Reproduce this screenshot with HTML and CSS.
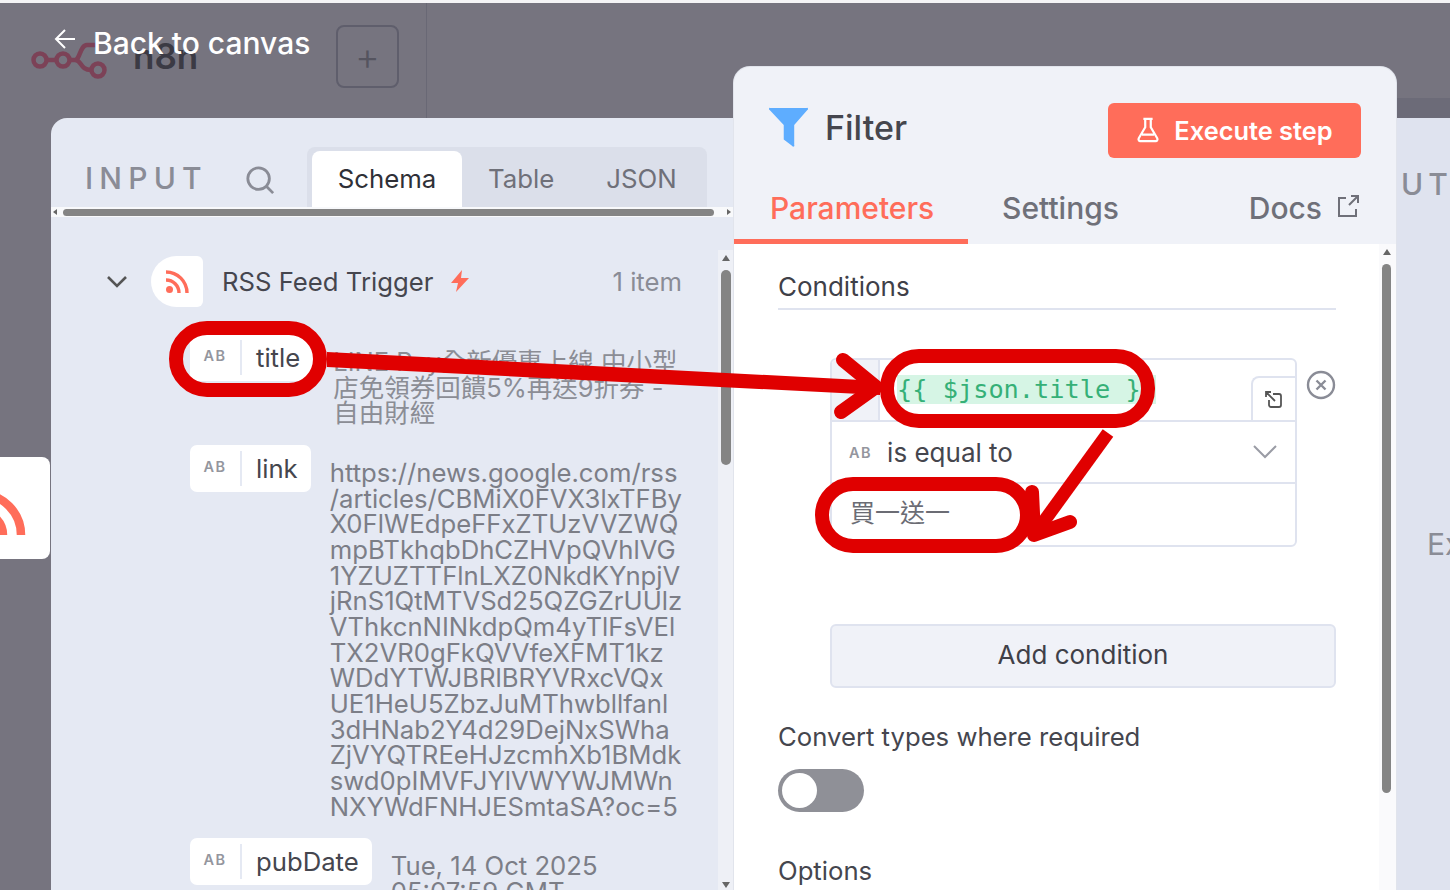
FILE: index.html
```html
<!DOCTYPE html>
<html lang="en">
<head>
  <meta charset="UTF-8" />
  <title>Filter</title>
  <link rel="stylesheet" href="styles.css">
</head>
<body>
  <div class="stage">
    <div class="topbar">
      <div class="logo-cell">
        <svg class="logo" width="78" height="40" viewBox="0 0 78 40" fill="none" stroke="#7c4257" stroke-width="4.500">
          <circle cx="9" cy="19" r="6.500"/><circle cx="32" cy="19" r="6.500"/><circle cx="67" cy="29" r="6.500"/>
          <path d="M16 19h9M39 19h5c5 0 5-15 12-15h10M44 19c7 0 5 10 16 10"/>
        </svg>
        <span class="n8n">n8n</span>
      </div>
      <div class="plus-box">+</div>
    </div>
    <div class="top-strip"></div>

    <a class="back">
      <svg width="24" height="24" viewBox="0 0 24 24" fill="none" stroke="#fff" stroke-width="2"><path d="M22 12H3M12 3l-9 9 9 9"/></svg>
      <span>Back to canvas</span>
    </a>

    <div class="node-card">
      <svg width="50" height="102" viewBox="0 0 50 102" fill="none" stroke="#ff6d5a" stroke-width="8.500">
        <path d="M-20 37a41 41 0 0 1 41 41"/><path d="M-20 55a23 23 0 0 1 23 23"/>
      </svg>
    </div>

    <section class="panel output">
      <div class="output-title">UT</div>
      <div class="output-hint">Ex</div>
    </section>

    <section class="panel input">
      <header class="input-head">
        <span class="input-label">INPUT</span>
        <svg class="search" width="30" height="30" viewBox="0 0 32 32" fill="none" stroke="#8a8c96" stroke-width="3"><circle cx="14.500" cy="14.500" r="11.500"/><path d="M23 23l7 7"/></svg>
        <div class="tabs">
          <span class="tab active">Schema</span>
          <span class="tab">Table</span>
          <span class="tab">JSON</span>
        </div>
      </header>
      <div class="hscroll"><i class="arr-l"></i><div class="hthumb"></div><i class="arr-r"></i></div>
      <div class="schema">
        <div class="trigger">
          <svg class="chev" width="22" height="14" viewBox="0 0 22 14" fill="none" stroke="#555" stroke-width="2.600"><path d="M2 2l9 9 9-9"/></svg>
          <div class="bubble">
            <svg width="26" height="26" viewBox="0 0 26 26" fill="none" stroke="#ff6d5a" stroke-width="3.400"><path d="M2 3a21 21 0 0 1 21 21"/><path d="M2 11a13 13 0 0 1 13 13"/><circle cx="5.500" cy="20.500" r="3.500" fill="#ff6d5a" stroke="none"/></svg>
          </div>
          <span class="trigger-name">RSS Feed Trigger</span>
          <svg class="bolt" width="20" height="24" viewBox="0 0 20 24" fill="#ff6d5a"><path d="M12 1L1 14h7l-2 9 13-14h-8z"/></svg>
          <span class="count">1 item</span>
        </div>

        <div class="row">
          <div class="pill"><span class="ab">AB</span><span class="key">title</span></div>
          <div class="val cjk val-title">LINE Pay全新優惠上線 中小型<br>店免領券回饋5%再送9折券 -<br>自由財經</div>
        </div>
        <div class="row">
          <div class="pill"><span class="ab">AB</span><span class="key">link</span></div>
          <div class="val val-link">https://news.google.com/rss<br>/articles/CBMiX0FVX3lxTFBy<br>X0FlWEdpeFFxZTUzVVZWQ<br>mpBTkhqbDhCZHVpQVhlVG<br>1YZUZTTFlnLXZ0NkdKYnpjV<br>jRnS1QtMTVSd25QZGZrUUlz<br>VThkcnNINkdpQm4yTlFsVEl<br>TX2VR0gFkQVVfeXFMT1kz<br>WDdYTWJBRlBRYVRxcVQx<br>UE1HeU5ZbzJuMThwbllfanl<br>3dHNab2Y4d29DejNxSWha<br>ZjVYQTREeHJzcmhXb1BMdk<br>swd0pIMVFJYlVWYWJMWn<br>NXYWdFNHJESmtaSA?oc=5</div>
        </div>
        <div class="row">
          <div class="pill"><span class="ab">AB</span><span class="key">pubDate</span></div>
          <div class="val val-date">Tue, 14 Oct 2025<br>05:07:59 GMT</div>
        </div>
      </div>
      <div class="vscroll"><i class="arr-u"></i><div class="vthumb"></div><i class="arr-d"></i></div>
    </section>

    <section class="panel center">
      <header class="center-head">
        <svg class="funnel" width="39" height="40" viewBox="0 0 40 42" fill="#5eadff"><path d="M1 1h38a1 1 0 0 1 1 2L26 19v21a1 1 0 0 1-2 1l-9-7V19L0 3a1 1 0 0 1 1-2z"/></svg>
        <h1>Filter</h1>
        <button class="run">
          <svg width="24" height="26" viewBox="0 0 26 28" fill="none" stroke="#fff" stroke-width="2.400"><path d="M8 2h10M10 2v9L3 23a2 2 0 0 0 2 3h16a2 2 0 0 0 2-3l-7-12V2M6.500 19h13"/></svg>
          <span>Execute step</span>
        </button>
      </header>
      <nav class="center-tabs">
        <span class="ctab on">Parameters</span>
        <span class="ctab">Settings</span>
        <span class="ctab docs">Docs
          <svg width="24" height="24" viewBox="0 0 24 24" fill="none" stroke="#6f7079" stroke-width="2"><path d="M10 4H3v18h17v-7M13 11L22 2M15 2h7v7"/></svg>
        </span>
      </nav>
      <div class="params">
        <div class="section-title">Conditions</div>
        <div class="cond-wrap">
          <div class="cond">
            <div class="cond-row first">
              <div class="fx-cell"></div>
              <div class="expr"><span>{{ $json.title }}</span></div>
              <div class="expand">
                <svg width="20" height="20" viewBox="0 0 20 20" fill="none" stroke="#555" stroke-width="1.800"><path d="M9 4h6a2 2 0 0 1 2 2v9a2 2 0 0 1-2 2H7a2 2 0 0 1-2-2v-5M2 2l9 9M2 7V2h5"/></svg>
              </div>
            </div>
            <div class="cond-row op">
              <span class="ab">AB</span>
              <span class="op-name">is equal to</span>
              <svg class="op-chev" width="24" height="14" viewBox="0 0 24 14" fill="none" stroke="#9a9ca5" stroke-width="2"><path d="M1 1l11 11L23 1"/></svg>
            </div>
            <div class="cond-row value cjk">買一送一</div>
          </div>
          <svg class="remove" width="30" height="30" viewBox="0 0 30 30" fill="none" stroke="#8a8c96" stroke-width="2.400"><circle cx="15" cy="15" r="13"/><path d="M10.500 10.500l9 9M19.500 10.500l-9 9"/></svg>
        </div>
        <button class="add">Add condition</button>
        <div class="field-label">Convert types where required</div>
        <div class="toggle"><i></i></div>
        <div class="field-label options">Options</div>
      </div>
      <div class="vscroll main"><i class="arr-u"></i><div class="vthumb"></div></div>
    </section>

    <svg class="marks" width="1450" height="890" viewBox="0 0 1450 890">
      <rect x="176" y="328" width="144" height="62" rx="31" class="ring"/>
      <rect x="887" y="356" width="261" height="65" rx="32" class="ring"/>
      <rect x="822" y="484" width="205" height="62" rx="31" class="ring"/>
      <path d="M327 352L880 381V395L327 367Z" fill="#e00000"/>
      <path d="M843 360L876 387L841 412" class="arrow"/>
      <path d="M1108 433L1034 535" class="arrow thin"/>
      <path d="M1032 492L1034 535L1070 522" class="arrow"/>
    </svg>
  </div>
</body>
</html>
```

FILE: styles.css
```css
html,body{margin:0;padding:0;height:100%;}
body{font-family:'Inter',sans-serif;color:#3f4048;overflow:hidden;}
.cjk{font-family:'Inter','Noto Sans CJK TC',sans-serif;}
.stage{position:relative;width:1450px;height:890px;overflow:hidden;background:#76747f;border-top:3px solid #f4f4f6;box-sizing:border-box;}

/* dimmed canvas behind the modal */
.topbar{display:flex;height:100%;align-items:flex-start;}
.logo-cell{width:336px;height:96px;display:flex;padding:38px 0 0 31px;box-sizing:border-box;gap:24px;}
.logo{flex:none;}
.n8n{font-size:35px;font-weight:600;color:#3b3a44;line-height:30px;}
.plus-box{width:63px;height:63px;margin-top:22px;border:2px solid #5f5e6c;border-radius:8px;box-sizing:border-box;color:#55545f;font-size:38px;font-weight:300;line-height:58px;text-align:center;}
.topbar::after{content:'';position:absolute;left:426px;top:0;height:115px;border-left:1px solid #696875;}
.top-strip{position:absolute;left:1390px;top:95px;width:60px;height:20px;background:#6c6b78;}

.back{position:absolute;left:53px;top:22px;display:flex;align-items:flex-start;gap:16px;color:#fff;font-size:30px;font-weight:500;line-height:36px;z-index:5;}
.back svg{margin-top:2px;}

.node-card{position:absolute;left:-10px;top:454px;width:60px;height:102px;background:#fff;border-radius:8px;display:flex;justify-content:flex-end;overflow:hidden;}

.panel{position:absolute;box-sizing:border-box;}
.output{left:1380px;top:115px;width:90px;bottom:0;background:#dfe3ef;color:#8a8c96;}
.output-title{position:absolute;left:21px;top:48px;font-size:30px;font-weight:500;letter-spacing:5px;}
.output-hint{position:absolute;left:47px;top:408px;font-size:30px;}

/* input panel */
.input{left:51px;top:115px;width:684px;bottom:0;background:#e5e9f3;border-radius:16px 0 0 0;overflow:hidden;}
.input-head{display:flex;align-items:flex-end;height:89px;padding-left:34px;}
.input-label{font-size:30px;letter-spacing:6.200px;color:#8a8c96;font-weight:500;width:160px;line-height:36px;margin-bottom:11px;flex:none;}
.search{margin-bottom:12px;flex:none;}
.tabs{display:flex;margin-left:32px;width:400px;height:60px;background:#dbdfea;border-radius:8px 8px 0 0;box-sizing:border-box;padding:4px 0 0 5px;color:#6f7079;font-size:25.800px;flex:none;}
.tab{line-height:56px;margin-right:52px;flex:none;}
.tab.active{background:#fff;color:#2f3037;width:150px;text-align:center;border-radius:8px 8px 0 0;margin-right:26px;}
.hscroll{position:relative;height:10px;background:#f8f9fb;}
.hthumb{position:absolute;left:12px;top:2px;width:651px;height:7px;background:#848484;border-radius:4px;}
.arr-l,.arr-r{position:absolute;top:2px;width:0;height:0;border:3px solid transparent;}
.arr-l{left:2px;border-right:4px solid #666;border-left:0;}
.arr-r{right:4px;border-left:4px solid #666;border-right:0;}

.schema{padding:39px 0 0 55px;}
.trigger{display:flex;align-items:center;height:51px;font-size:25.700px;}
.chev{margin-right:23px;}
.bubble{width:52px;height:51px;background:#fff;border-radius:26px 6px 6px 26px;display:flex;align-items:center;justify-content:center;margin-right:19px;}
.trigger-name{color:#45464e;}
.bolt{margin:0 0 2px 17px;}
.count{margin-left:auto;margin-right:53px;color:#8a8c96;}

.row{display:flex;margin:0 0 19px 84px;align-items:flex-start;}
.trigger + .row{margin-top:27px;}
.pill{display:flex;align-items:stretch;background:#fff;border-radius:7px;height:47px;padding:6px 13px 6px 0;box-sizing:border-box;flex:none;}
.ab{font-size:14.500px;font-weight:600;letter-spacing:1.500px;color:#94969e;}
.pill .ab{width:52px;text-align:center;line-height:32px;border-right:2px solid #e5e9f3;box-sizing:border-box;}
.key{font-size:25.700px;line-height:36px;padding-left:14px;color:#45464e;}
.val{font-size:25.700px;line-height:25.650px;color:#7c7e87;margin:15px 0 0 19px;white-space:nowrap;}
.val-title{margin-left:20px;font-size:25.500px;color:#8b8d95;}

.vscroll{position:absolute;right:0;top:132px;width:17px;bottom:0;background:#eef0f6;}
.vthumb{position:absolute;left:3px;top:20px;width:10px;height:195px;background:#848484;border-radius:5px;}
.arr-u,.arr-d{position:absolute;left:4px;width:0;height:0;border:4.500px solid transparent;}
.arr-u{top:5px;border-bottom:6px solid #666;border-top:0;}
.arr-d{bottom:2px;border-top:6px solid #666;border-bottom:0;}

/* center panel */
.center{left:734px;top:64px;width:662px;bottom:0;background:#f0f2f8;border-radius:16px 16px 0 0;box-shadow:0 0 0 1px #e1e4ec;overflow:hidden;}
.center-head{display:flex;align-items:center;height:91px;padding:36px 35px 0 35px;box-sizing:border-box;}
.funnel{margin-bottom:8px;flex:none;}
.center-head h1{font-size:34px;font-weight:500;margin:0 0 6px 17px;color:#45464e;line-height:42px;}
.run{margin-left:auto;margin-bottom:1px;width:253px;height:55px;padding-bottom:1px;background:#ff6d5a;border:none;border-radius:6px;color:#fff;font:600 25.400px 'Inter',sans-serif;display:flex;align-items:center;justify-content:center;gap:14px;}
.center-tabs{position:relative;display:flex;height:86px;font-size:30px;color:#6f7079;font-weight:500;}
.ctab{line-height:36px;padding-top:32px;}
.ctab.on{width:234px;box-sizing:border-box;padding-left:36px;color:#ff6d5a;border-bottom:5px solid #ff6d5a;}
.ctab:nth-child(2){margin-left:34px;}
.docs{margin-left:auto;margin-right:36px;display:flex;gap:14px;}
.docs svg{margin-top:4px;}

.params{position:relative;background:#fff;height:650px;padding:28px 60px 0 44px;box-sizing:border-box;}
.section-title{font-size:26px;font-weight:400;color:#3f4048;line-height:30px;padding-bottom:6px;border-bottom:2px solid #dfe3ef;}
.cond-wrap{position:relative;margin:48px 0 0 52px;width:467px;}
.cond{border:2px solid #dfe3ef;border-radius:6px;box-sizing:border-box;height:189px;overflow:hidden;}
.cond-row{display:flex;align-items:center;box-sizing:border-box;height:62px;border-bottom:2px solid #dfe3ef;font-size:26px;}
.cond-row:last-child{border-bottom:none;}
.first{align-items:stretch;}
.fx-cell{width:46px;background:#f0f2f8;border-right:2px solid #dfe3ef;}
.expr{flex:1;padding:15px 0 0 17px;font:25.300px/30px 'DejaVu Sans Mono',monospace;color:#35b077;white-space:nowrap;}
.expr span{background:#d6f5e5;}
.expand{width:44px;height:46px;margin-top:16px;border:2px solid #dfe3ef;border-width:2px 0 0 2px;border-radius:8px 0 0 0;box-sizing:border-box;display:flex;align-items:center;justify-content:center;}
.op{padding-left:17px;color:#45464e;}
.op-name{margin-left:15px;}
.op-chev{margin-left:auto;margin-right:18px;}
.value{padding:0 0 8px 18px;color:#6b6c74;font-size:25px;}
.remove{position:absolute;left:476px;top:12px;}
.add{display:block;margin:77px 0 0 52px;width:506px;height:64px;padding:0 0 3px;background:#f0f2f8;border:2px solid #dfe3ef;border-radius:6px;font:400 26px 'Inter',sans-serif;color:#3f4048;}
.field-label{font-size:25.700px;line-height:32px;margin-top:33px;color:#45464e;}
.toggle{width:86px;height:43px;margin-top:16px;border-radius:22px;background:#8f9097;padding:4px;box-sizing:border-box;}
.toggle i{display:block;width:35px;height:35px;border-radius:50%;background:#fff;}
.field-label.options{margin-top:43px;}
.vscroll.main{top:177px;background:#fafafc;}
.vscroll.main .vthumb{top:20px;height:529px;left:3px;width:9px;}

/* red annotations */
.marks{position:absolute;left:0;top:-3px;z-index:10;pointer-events:none;}
.ring{fill:none;stroke:#e00000;stroke-width:14;}
.arrow{fill:none;stroke:#e00000;stroke-width:14;stroke-linecap:round;stroke-linejoin:round;}
.arrow.thin{stroke-linecap:butt;stroke-width:13;}
```
